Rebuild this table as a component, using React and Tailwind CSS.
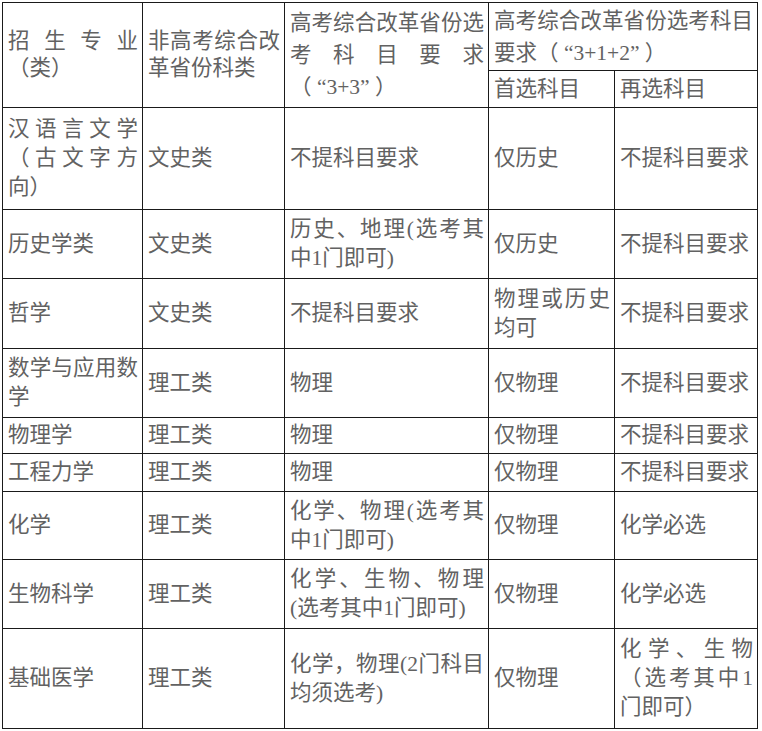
const cell =
  "border border-[#1a1a1a] align-middle text-justify pl-[5px] pr-[4px] py-0 font-normal";

const rows = [
  { h: "h-[102px]", c: ["汉语言文学（古文字方向）", "文史类", "不提科目要求", "仅历史", "不提科目要求"] },
  { h: "h-[69px]", c: ["历史学类", "文史类", "历史、地理(选考其中1门即可)", "仅历史", "不提科目要求"] },
  { h: "h-[70px]", c: ["哲学", "文史类", "不提科目要求", "物理或历史均可", "不提科目要求"] },
  { h: "h-[69px]", c: ["数学与应用数学", "理工类", "物理", "仅物理", "不提科目要求"] },
  { h: "h-[36px]", c: ["物理学", "理工类", "物理", "仅物理", "不提科目要求"] },
  { h: "h-[38px]", c: ["工程力学", "理工类", "物理", "仅物理", "不提科目要求"] },
  { h: "h-[68px]", c: ["化学", "理工类", "化学、物理(选考其中1门即可)", "仅物理", "化学必选"] },
  { h: "h-[69px]", c: ["生物科学", "理工类", "化学、生物、物理(选考其中1门即可)", "仅物理", "化学必选"] },
  { h: "h-[100px]", c: ["基础医学", "理工类", "化学，物理(2门科目均须选考)", "仅物理", "化学、生物（选考其中1门即可）"] },
];

export default function App() {
  return (
    <div className="w-[762px] h-[731px] bg-white pt-[2px] pl-[2px]">
      <table className="border-collapse table-fixed w-[756px] text-[21.5px] text-[#626262] font-['Liberation_Serif','Noto_Sans_CJK_SC',serif]">
        <colgroup>
          <col className="w-[140px]" />
          <col className="w-[142px]" />
          <col className="w-[204px]" />
          <col className="w-[126px]" />
          <col className="w-[143px]" />
        </colgroup>
        <tbody>
          <tr className="h-[68px]">
            <td rowSpan={2} className={`${cell} leading-[27px]`}>招生专业（类）</td>
            <td rowSpan={2} className={`${cell} leading-[27px]`}>非高考综合改革省份科类</td>
            <td rowSpan={2} className={`${cell} leading-[32px]`}>
              高考综合改革省份选考科目要求
              <span className="whitespace-nowrap">（ “3+3” ）</span>
            </td>
            <td colSpan={2} className={`${cell} leading-[32px]`}>
              高考综合改革省份选考科目要求
              <span className="whitespace-nowrap">（ “3+1+2” ）</span>
            </td>
          </tr>
          <tr className="h-[37px]">
            <td className={`${cell} leading-[29px]`}>首选科目</td>
            <td className={`${cell} leading-[29px]`}>再选科目</td>
          </tr>
          {rows.map((r, i) => (
            <tr key={i} className={r.h}>
              {r.c.map((t, j) => (
                <td key={j} className={`${cell} leading-[29px]`}>{t}</td>
              ))}
            </tr>
          ))}
        </tbody>
      </table>
    </div>
  );
}
